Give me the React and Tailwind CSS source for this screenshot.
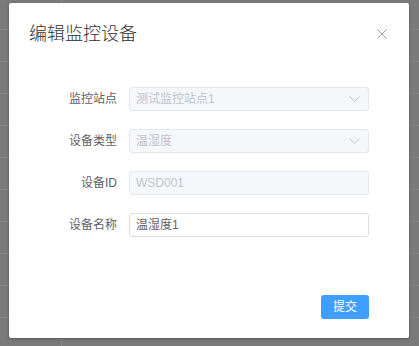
import React from "react";

const font = { fontFamily: '"Liberation Sans","Noto Sans CJK SC",sans-serif' };

function Chevron() {
  return (
    <svg width="11" height="6" viewBox="0 0 11 6" className="shrink-0">
      <path d="M0.5 0.5 L5.5 5.2 L10.5 0.5" fill="none" stroke="#c0c4cc" strokeWidth="1" />
    </svg>
  );
}

function Row({ label, children }) {
  return (
    <div className="flex items-center h-6">
      <div className="w-[120px] pr-3 text-right text-[12px] text-[#606266] leading-6">{label}</div>
      {children}
    </div>
  );
}

function DisabledField({ value, select }) {
  return (
    <div className="flex items-center w-[240px] h-6 rounded-[3px] border border-[#e4e7ed] bg-[#f5f7fa] pl-[6px] pr-[8px]">
      <span className="flex-1 text-[12px] text-[#c0c4cc] leading-6">{value}</span>
      {select && <Chevron />}
    </div>
  );
}

export default function App() {
  const rows = Array.from({ length: 11 });
  return (
    <div className="relative w-[419px] h-[346px] overflow-hidden bg-[#7a7a7a]" style={font}>
      <div className="flex flex-col">
        <div className="h-[30px] border-b border-[#858585]" />
        {rows.map((_, i) => (
          <div key={i} className="h-[32px] border-b border-[#858585]" />
        ))}
      </div>
      <div className="absolute left-[61px] top-0 bottom-0 w-px bg-[#858585]" />

      <div className="absolute left-[9px] top-[3px] w-[400px] h-[335px] bg-white rounded-[2px] shadow-[0_1px_3px_rgba(0,0,0,0.3)] flex flex-col">
        <div className="relative pt-[19px] px-5">
          <div className="text-[18px] leading-6 text-[#303133] font-light">编辑监控设备</div>
          <svg
            className="absolute right-[22px] top-[26px]"
            width="10"
            height="10"
            viewBox="0 0 10 10"
          >
            <path d="M0.5 0.5 L9.5 9.5 M9.5 0.5 L0.5 9.5" stroke="#909399" strokeWidth="0.9" />
          </svg>
        </div>

        <div className="mt-[41px] flex flex-col gap-[18px]">
          <Row label="监控站点">
            <DisabledField value="测试监控站点1" select />
          </Row>
          <Row label="设备类型">
            <DisabledField value="温湿度" select />
          </Row>
          <Row label="设备ID">
            <DisabledField value="WSD001" />
          </Row>
          <Row label="设备名称">
            <div className="flex items-center w-[240px] h-6 rounded-[3px] border border-[#dcdfe6] bg-white pl-[6px]">
              <span className="text-[12px] text-[#606266] leading-6">温湿度1</span>
            </div>
          </Row>
        </div>

        <div className="mt-[58px] flex justify-end pr-10">
          <button className="w-12 h-6 rounded-[3px] bg-[#409eff] text-white text-[12px] leading-6">提交</button>
        </div>
      </div>
    </div>
  );
}
